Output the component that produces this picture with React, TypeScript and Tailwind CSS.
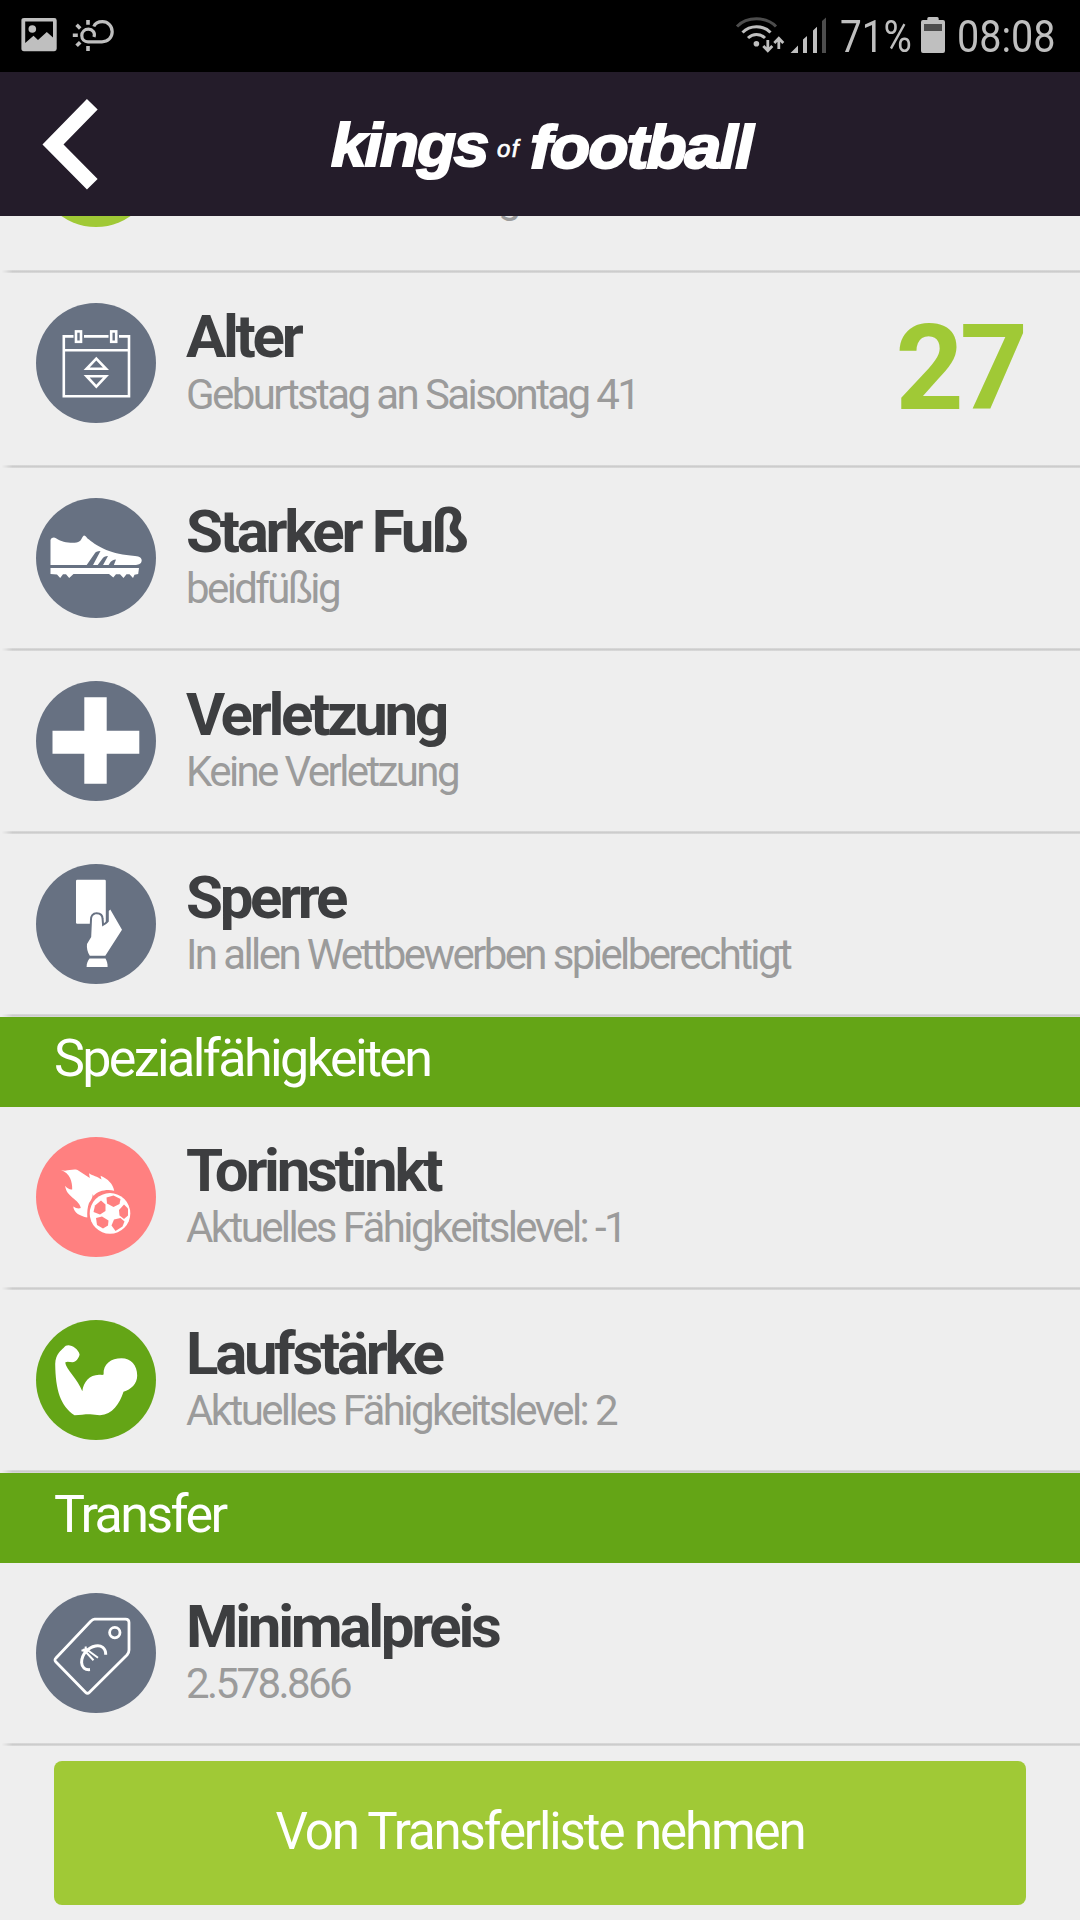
import React from 'react';

const SLATE = '#677182';

interface PlayerRow {
    title: string;
    subtitle: string;
    icon: React.ReactNode;
    value?: string;
}

const CalendarIcon = () => (
    <svg width="120" height="120" viewBox="0 0 120 120" fill="none" stroke="#fff" strokeWidth="2.6">
        <circle cx="60" cy="60" r="60" fill={SLATE} stroke="none" />
        <path d="M37.5 33.4H27.8V93.2H93V33.4H83M48 33.4H72.5" />
        <path d="M27.8 47.2H93" />
        <rect x="40" y="28.4" width="5" height="10.4" />
        <rect x="75.2" y="28.4" width="5" height="10.4" />
        <path d="M60.3 55.6L70 65.8H50.6ZM60.3 83.6L70 73.2H50.6Z" />
    </svg>
);

const ShoeIcon = () => (
    <svg width="120" height="120" viewBox="0 0 120 120" fill="#fff">
        <circle cx="60" cy="60" r="60" fill={SLATE} />
        <path d="M14.5 67V42C15.5 39.5 18 39 20 40.2C26 44.5 39 46.5 43.5 43.3C46 41.5 46 38 48.3 37.4C50.5 38 50.5 40 53 41.6C62 49 75 56.5 99 57.9C104 58.5 105.8 60 105.7 62.6C105.5 65.5 103 67 100 67Z" />
        <path fill={SLATE} d="M64.5 53C61 53 59.5 54 58.5 55.8L50 68H56.5ZM72 58C69 58 67.5 59 66.5 60.5L61 68H66.5ZM80 61.5C77 61.5 75.5 63 74.5 64L72 68H77.5Z" />
        <path d="M14.5 70H103L102.2 76L98.5 76.8L97 80L93.5 76.3H90.5L87.5 80L84 76.3H80L77.3 79.4L73 76H37.5L33.2 80L30 76.3H27L24.2 80L21 76.5L14.5 76Z" />
    </svg>
);

const PlusIcon = () => (
    <svg width="120" height="120" viewBox="0 0 120 120" fill="#fff">
        <circle cx="60" cy="60" r="60" fill={SLATE} />
        <path d="M48.3 16.3H70.7V49.7H103.3V72.7H70.7V102.7H48.3V72.7H16.5V49.7H48.3Z" />
    </svg>
);

const CardIcon = () => (
    <svg width="120" height="120" viewBox="0 0 120 120" fill="#fff">
        <circle cx="60" cy="60" r="60" fill={SLATE} />
        <rect x="40" y="15.7" width="29.8" height="44" rx="1.2" />
        <path
            stroke={SLATE}
            strokeWidth="4"
            paintOrder="stroke"
            d="M60.6 50.2C57.5 50.2 56 52.5 56 55.5L55.2 73L51 80C50.5 84 51.5 88 53.8 91.8H69.3L86 65.8L74.3 45.6L72.8 47V57.5C71 59.5 69 61 66.2 62.5L65.6 55C65.6 52 64 50.2 60.6 50.2Z"
        />
        <path d="M53.5 94.5H69.5C71 97 71.6 99.5 71.6 103H50.6C50.6 99.5 51.5 97 53.5 94.5Z" />
    </svg>
);

const FireBallIcon = () => (
    <svg width="120" height="120" viewBox="0 0 120 120" fill="#fff">
        <circle cx="60" cy="60" r="60" fill="#ff8080" />
        <path d="M25 33C31 35 36 31.5 41.5 33L53.8 41L53 36.2C57 39 61 39 65.5 42.6L64.5 38.8C72 42 77 47 78.2 53.7C70 52 62 54 57.5 59L56.8 57C56.6 61 55 63 53 66C51.5 70 51 75 51.3 80.6C44 79 38 76 37.2 69.5C40 71.5 43 72 44.8 71C43 62 30 60 29.2 48.8C31.5 52 34.5 53 36.2 52.4C36.5 45 34 36 25 33Z" />
        <circle cx="74" cy="76.4" r="20.3" />
        <g fill="#ff8080">
            <path d="M70.5 60.5L77.5 58.5L84.5 62L83.5 67L77.5 70L71 66.5Z" />
            <path d="M59 68.5L65 63.5L69.5 67.5L69.5 74L64 77.5L57.5 75Z" />
            <path d="M60 81L66 79.5L72.5 83.5L72 88.5L67 91.5L61 88Z" />
            <path d="M78 82.5L84.5 81L88.5 84.5L86.5 89.5L79.5 94L75.5 88.5Z" />
            <path d="M83 73L88 67.5L92 71.5V78.5L88 82L83.5 78.5Z" />
        </g>
    </svg>
);

const BicepsIcon = () => (
    <svg width="120" height="120" viewBox="0 0 120 120" fill="#fff">
        <circle cx="60" cy="60" r="60" fill="#64a516" />
        <path d="M32.3 25.3C36.5 25.3 42.5 29.5 43.6 34.5C42.8 38.5 40 41.8 36.5 42.3C34 42.3 31.5 41 29.2 42.4C30 49 42 59.5 46.3 71.2C47.5 62 53.5 55 63 54.8C65 54.7 66.5 55.2 67.6 54.6C67 44 75 38.3 85.5 38.3C95 38.3 101.2 45.5 101.2 55.5C101.2 64 95 69.5 87.5 71.8C83.5 84 76.5 94.5 64 95.2C60 95.2 58 94.3 54 94.3C48 94.3 44 95 38.5 95.2C24.5 86 19.5 70 19.2 44C19.5 34 25.5 30 27.5 28C29 26 30.5 25.3 32.3 25.3Z" />
    </svg>
);

const TagIcon = () => (
    <svg width="120" height="120" viewBox="0 0 120 120" fill="none" stroke="#fff" strokeWidth="2.8" strokeLinejoin="round">
        <circle cx="60" cy="60" r="60" fill={SLATE} stroke="none" />
        <path d="M58.5 26.2H89.5C92 26.2 93 27.3 93 29.5V57C93 59.5 92.5 60.3 91 62L53.5 99.3C52 100.8 51 100.8 49.5 99.3L20 69C18.5 67.3 18.5 66.5 20 65L54.5 28.5C56 27 57 26.2 58.5 26.2Z" />
        <circle cx="78.8" cy="39.6" r="5.2" />
        <path strokeWidth="3" d="M69.7 61.8C70 55 65 51.8 59.5 53C52 54.5 45.5 61.5 45.6 69.5C45.8 74.5 49 77 54 76.6" />
        <path strokeWidth="2" d="M49.5 53.5L50 56L62 64.8M45.5 57.2L49 58L57.5 67.2M47 57L50 56" />
    </svg>
);

const stats: PlayerRow[] = [
    { title: 'Starker Fuß', subtitle: 'beidfüßig', icon: <ShoeIcon /> },
    { title: 'Verletzung', subtitle: 'Keine Verletzung', icon: <PlusIcon /> },
    { title: 'Sperre', subtitle: 'In allen Wettbewerben spielberechtigt', icon: <CardIcon /> },
];

const skills: PlayerRow[] = [
    { title: 'Torinstinkt', subtitle: 'Aktuelles Fähigkeitslevel: -1', icon: <FireBallIcon /> },
    { title: 'Laufstärke', subtitle: 'Aktuelles Fähigkeitslevel: 2', icon: <BicepsIcon /> },
];

const Divider = () => (
    <div className="h-[3px] w-full shrink-0 bg-linear-to-b from-[#dcdcdc] via-[#cccccc] to-[#dcdcdc] [mask-image:linear-gradient(to_right,transparent_2px,black_12px)]" />
);

const Row = ({ title, subtitle, icon, value }: PlayerRow) => (
    <div className={`flex flex-col justify-between ${value ? 'h-[195px]' : 'h-[183px]'}`}>
        <div className="flex pl-9 pt-[29.5px]">
            <div className="size-[120px] shrink-0">{icon}</div>
            <div className="ml-[30px] mt-[4px] flex-1 whitespace-nowrap">
                <h3 className="text-[60px] leading-[60px] font-bold tracking-[-3.3px] text-[#3d3e40]">{title}</h3>
                <p className={`text-[42px] leading-[50px] tracking-[-2.6px] text-[#9b9b9b] ${value ? 'mt-[3px]' : 'mt-[2.4px]'}`}>{subtitle}</p>
            </div>
            {value && <span className="mr-[56px] mt-[6px] text-[119px] leading-[120px] font-bold tracking-[-4px] text-[#a0c936]">{value}</span>}
        </div>
        <Divider />
    </div>
);

const SectionHeader = ({ children }: { children: React.ReactNode }) => (
    <h2 className="h-[90px] bg-[#64a516] pl-[54px] text-[52px] leading-[84px] tracking-[-2.6px] text-white">{children}</h2>
);

const StatusBar = () => (
    <div className="flex h-[72px] shrink-0 items-start justify-between bg-black text-[#bfbfbf]">
        <svg width="130" height="72" viewBox="0 0 130 72" fill="none" stroke="currentColor">
            <path
                fill="currentColor"
                stroke="none"
                fillRule="evenodd"
                d="M24 18H54.3Q56.7 18 56.7 20.4V48.8Q56.7 51.2 54.3 51.2H24Q21.4 51.2 21.4 48.8V20.4Q21.4 18 24 18ZM25.2 21.6V43L33.5 35.8L38 40L46.8 32L53 37.4V21.6Z"
            />
            <circle cx="32.3" cy="29" r="3.8" fill="currentColor" stroke="none" />
            <path strokeWidth="3.2" d="M94 37C95.5 32.5 92.5 29.2 88.5 29.2C84.5 29.2 81.8 32 81.8 35.5C81.8 39.5 84.5 41.8 88 41.8H102C108 41.8 112.2 37.5 112.2 31.8C112.2 26 108 21.7 102.5 21.7C98.5 21.7 95 23.5 93.8 26.5" />
            <path strokeWidth="3.6" d="M88 20V24.8M88 46V51M72.8 35.3H77.8M76.6 24.8L80.2 28.4M76.6 45.8L80.2 42.2" />
        </svg>
        <div className="flex">
            <svg width="106" height="72" viewBox="734 0 106 72" fill="none" stroke="currentColor" strokeWidth="3">
                <path stroke="#4d4d4d" d="M737 26.5C747 16.3 766 16.3 776 26.5" />
                <path d="M742.5 32.5C750 24.8 763 24.8 770.5 32.5M748 38C753 33.2 760 33.2 765 38" />
                <circle cx="756.4" cy="43.7" r="2.8" fill="currentColor" stroke="none" />
                <path strokeWidth="2.8" d="M767.8 40V51M763.3 46L767.8 50.8L772.3 46M778.8 49V38.5M774.3 43L778.8 38.3L783.3 43" />
                <path stroke="none" fill="currentColor" d="M790.5 53L798 45.5V53ZM803 53V39.5L807 36V53ZM813 53V30.5L817 26.8V53Z" />
                <path stroke="none" fill="#4d4d4d" d="M822 53V21L826 17.5V53Z" />
            </svg>
            <div className="w-[78px] origin-left scale-x-[0.86] pt-[11px] text-[45px] leading-[52px]">71%</div>
            <svg width="30" height="72" viewBox="918 0 30 72" fill="currentColor">
                <path d="M927.3 20V18.5Q927.3 17 928.8 17H937.2Q938.7 17 938.7 18.5V20H943Q945 20 945 22V51Q945 53 943 53H923Q921 53 921 51V22Q921 20 923 20Z" />
                <path fill="#4d4d4d" d="M924 24H942V31H924Z" />
            </svg>
            <div className="ml-[9px] w-[123px] origin-left scale-x-[0.88] pt-[11px] text-[45px] leading-[52px]">08:08</div>
        </div>
    </div>
);

const Header = () => (
    <header className="flex h-[144px] shrink-0 items-center bg-[#241c2a]">
        <svg className="ml-[42px]" width="56" height="92" viewBox="0 0 56 92" fill="none" stroke="#fff" strokeWidth="15">
            <path d="M50.3 6.3L11 46.5L50.3 86.2" />
        </svg>
        <div className="ml-[233px] mt-[3px] flex items-baseline font-['Liberation_Sans',sans-serif] italic text-white">
            <span className="w-[166px] origin-left scale-x-[1.05] text-[61px] leading-[70px] font-bold tracking-[-2.1px] [-webkit-text-stroke:2px_white]">kings</span>
            <span className="w-[33px] -translate-y-[9px] text-[24px] tracking-[1.4px] [-webkit-text-stroke:0.7px_white]">of</span>
            <span className="origin-left translate-y-[2px] scale-x-[1.085] text-[61px] font-bold tracking-[-2px] [-webkit-text-stroke:2px_white]">football</span>
        </div>
    </header>
);

const App: React.FC = () => {
    return (
        <div className="flex h-[1920px] w-[1080px] flex-col overflow-hidden bg-[#eeeeee] font-[Roboto,sans-serif]">
            <StatusBar />
            <Header />
            <main className="flex flex-col">
                {/* bottom edge of the row scrolled under the header */}
                <div className="flex h-[57px] flex-col justify-between overflow-hidden">
                    <div className="flex h-[54px] items-start overflow-hidden pl-9">
                        <div className="-mt-[109px] size-[120px] shrink-0 rounded-full bg-[#a0c936]" />
                        <span className="-mt-[43px] ml-[342px] text-[42px] leading-[50px] text-[#9b9b9b]">g</span>
                    </div>
                    <Divider />
                </div>
                <Row title="Alter" subtitle="Geburtstag an Saisontag 41" icon={<CalendarIcon />} value="27" />
                {stats.map((row) => (
                    <Row key={row.title} {...row} />
                ))}
                <SectionHeader>Spezialfähigkeiten</SectionHeader>
                {skills.map((row) => (
                    <Row key={row.title} {...row} />
                ))}
                <SectionHeader>Transfer</SectionHeader>
                <Row title="Minimalpreis" subtitle="2.578.866" icon={<TagIcon />} />
                <button className="mx-[54px] mt-[15px] h-[144px] rounded-lg bg-[#a0c936] pb-[2px] text-[51px] tracking-[-2.1px] text-white">
                    Von Transferliste nehmen
                </button>
            </main>
        </div>
    );
};

export default App;
